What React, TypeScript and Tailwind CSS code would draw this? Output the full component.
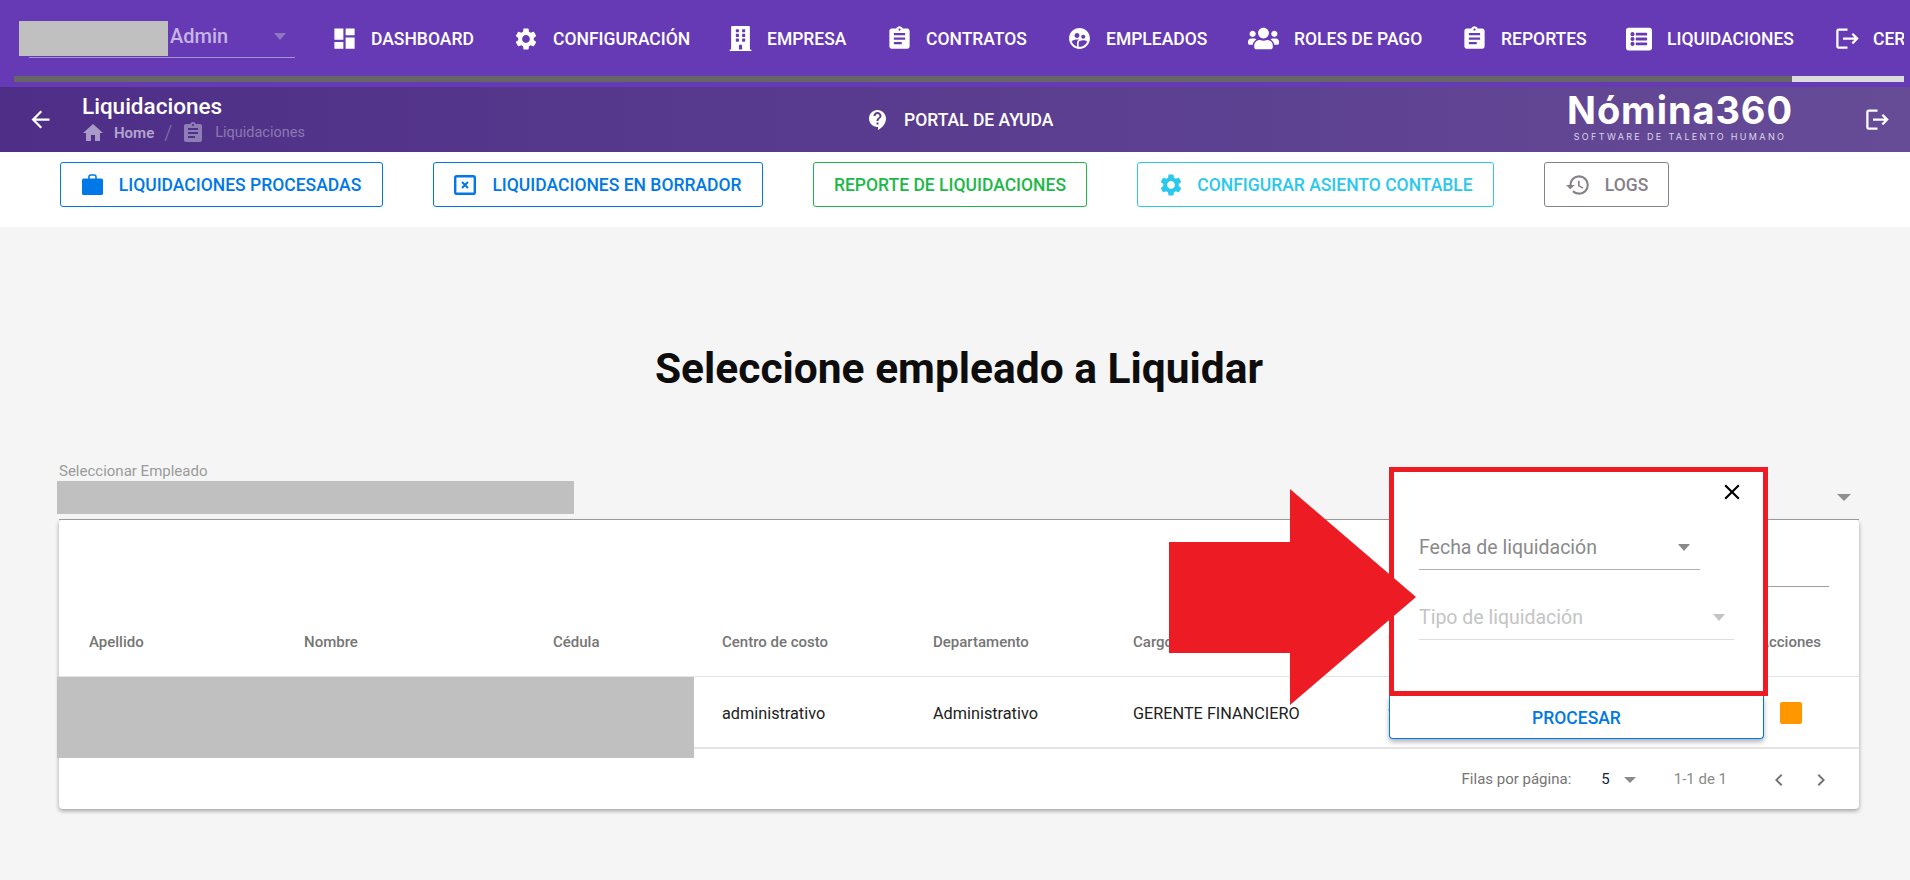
import React from "react";
import { MdDashboard, MdSettings, MdAssignment, MdHome, MdContactSupport, MdArrowBack, MdLogout, MdHistory, MdClose, MdChevronLeft, MdChevronRight, MdSupervisedUserCircle } from "react-icons/md";
import { FaBuilding, FaUsers, FaListAlt } from "react-icons/fa";

const font = { fontFamily: "Roboto, sans-serif" };

function BagIcon() {
  return (
    <svg width="21" height="21" viewBox="0 0 21 21" fill="currentColor">
      <path d="M7 5.5V2.8C7 1.8 7.8 1 8.8 1h3.4c1 0 1.8.8 1.8 1.8v2.7" fill="none" stroke="currentColor" strokeWidth="1.6" />
      <rect x="0" y="4.5" width="21" height="16.5" rx="1.6" />
    </svg>
  );
}

function XBoxIcon() {
  return (
    <svg width="22" height="20" viewBox="0 0 22 20" fill="none" stroke="currentColor">
      <rect x="1.2" y="1.2" width="19.6" height="17.6" rx="1.6" strokeWidth="2.4" />
      <path d="M8 7l6 6M14 7l-6 6" strokeWidth="2" />
    </svg>
  );
}

const navItems: { label: string; icon: React.ReactNode; w: string; box: string }[] = [
  { label: "DASHBOARD", icon: <MdDashboard className="h-[27px] w-[27px]" />, w: "w-[182px]", box: "w-[54px]" },
  { label: "CONFIGURACIÓN", icon: <MdSettings className="h-[26px] w-[26px]" />, w: "w-[214px]", box: "w-[54px]" },
  { label: "EMPRESA", icon: <FaBuilding className="h-[25px] w-[25px]" />, w: "w-[159px]", box: "w-[54px]" },
  { label: "CONTRATOS", icon: <MdAssignment className="h-[27px] w-[27px]" />, w: "w-[180px]", box: "w-[54px]" },
  { label: "EMPLEADOS", icon: <MdSupervisedUserCircle className="h-[25px] w-[25px]" />, w: "w-[181px]", box: "w-[54px]" },
  { label: "ROLES DE PAGO", icon: <FaUsers className="h-[25px] w-[31px]" />, w: "w-[214px]", box: "w-[61px]" },
  { label: "REPORTES", icon: <MdAssignment className="h-[27px] w-[27px]" />, w: "w-[164px]", box: "w-[54px]" },
  { label: "LIQUIDACIONES", icon: <FaListAlt className="h-[26px] w-[26px]" />, w: "w-[208px]", box: "w-[56px]" },
  { label: "CERRAR SESIÓN", icon: <MdLogout className="h-[27px] w-[27px]" />, w: "w-[200px]", box: "w-[54px] pl-[3px]" },
];

const actions = [
  { label: "LIQUIDACIONES PROCESADAS", icon: <BagIcon />, cls: "w-[323px] gap-[16px] text-[#0078e7] border-[#0078e7]" },
  { label: "LIQUIDACIONES EN BORRADOR", icon: <XBoxIcon />, cls: "w-[330px] gap-[16px] text-[#0078e7] border-[#0078e7]" },
  { label: "REPORTE DE LIQUIDACIONES", icon: null, cls: "w-[274px] gap-[16px] text-[#1db84a] border-[#1db84a]" },
  { label: "CONFIGURAR ASIENTO CONTABLE", icon: <MdSettings className="h-[26px] w-[26px]" />, cls: "w-[357px] gap-[13px] text-[#2bc8ee] border-[#2bc8ee]" },
  { label: "LOGS", icon: <MdHistory className="h-[26px] w-[26px]" />, cls: "w-[125px] gap-[14px] text-[#86808a] border-[#86808a]" },
];

const cols = [
  { name: "Apellido", w: "w-[215px]", val: "" },
  { name: "Nombre", w: "w-[249px]", val: "" },
  { name: "Cédula", w: "w-[169px]", val: "" },
  { name: "Centro de costo", w: "w-[211px]", val: "administrativo" },
  { name: "Departamento", w: "w-[200px]", val: "Administrativo" },
  { name: "Cargo", w: "w-[255px]", val: "GERENTE FINANCIERO" },
  { name: "Fecha", w: "w-[371px]", val: "2" },
];

export default function App() {
  return (
    <div style={font} className="relative h-[880px] w-[1910px] overflow-hidden bg-[#f5f5f5]">
      {/* top bar */}
      <header className="h-[87px] bg-[#673ab5] pt-[22px]">
        <div className="flex h-[37px] items-start">
          <div className="relative ml-[29px] flex h-[36px] w-[266px] shrink-0 items-center border-b border-[#a593cd] pb-[7px] pl-[141px]">
            <span className="absolute -left-[10px] -top-px h-[35px] w-[149px] bg-[#c0c0c0]" />
            <span className="text-[20px] font-medium text-[#c5b5e3]">Admin</span>
            <span className="ml-auto mr-[9px] h-0 w-0 border-x-[6px] border-t-[7px] border-x-transparent border-t-[#8d77bf]" />
          </div>
          <nav className="ml-[22px] mr-[6px] flex min-w-0 flex-1 overflow-hidden text-[17.5px] font-medium text-white">
            {navItems.map((n) => (
              <div key={n.label} className={`flex h-[33px] shrink-0 items-center whitespace-nowrap ${n.w}`}>
                <span className={`flex shrink-0 justify-center ${n.box}`}>{n.icon}</span>
                <span className="pt-px">{n.label}</span>
              </div>
            ))}
          </nav>
        </div>
        <div className="ml-[14px] mt-[17px] flex h-[6px] w-[1890px]">
          <div className="flex-1 bg-[#666666]" />
          <div className="w-[112px] bg-[#dcdcdc]" />
        </div>
      </header>

      {/* breadcrumb bar */}
      <section className="relative flex h-[65px] items-center bg-gradient-to-r from-[#4e2e87] to-[#664b97] text-white">
        <MdArrowBack className="ml-[27px] h-[27px] w-[27px] shrink-0" />
        <div className="ml-[28px] flex h-full w-[785px] shrink-0 flex-col pt-[4px]">
          <span className="text-[22.5px] font-medium leading-[30px]">Liquidaciones</span>
          <div className="flex items-center text-[15px] leading-[20px]">
            <MdHome className="-ml-[1px] h-[24px] w-[24px] text-[#a99ac8]" />
            <span className="ml-[9px] font-semibold text-[#b3a6cf]">Home</span>
            <span className="ml-[10px] text-[20px] font-light text-[#8a75b0]">/</span>
            <MdAssignment className="ml-[9px] h-[24px] w-[24px] text-[#8f7eb5]" />
            <span className="ml-[10px] text-[14.5px] text-[#8a79b0]">Liquidaciones</span>
          </div>
        </div>
        <div className="flex w-[702px] shrink-0 items-center gap-[14px] text-[17.5px] font-medium">
          <MdContactSupport className="-ml-[1px] h-[24px] w-[24px]" />
          <span className="pt-[2px]">PORTAL DE AYUDA</span>
        </div>
        <div style={{ fontFamily: "Inter, sans-serif" }} className="-mt-[8px] flex w-[222px] shrink-0 flex-col items-center whitespace-nowrap">
          <span className="text-[38px] font-bold leading-[40px] tracking-[0.9px]">Nómina360</span>
          <span className="mt-[2px] text-[9px] leading-[10px] tracking-[2.35px] text-[#dcd6ea]">SOFTWARE DE TALENTO HUMANO</span>
        </div>
        <MdLogout className="ml-[73px] h-[27px] w-[27px] shrink-0" />
      </section>

      {/* action buttons */}
      <section className="flex h-[75px] gap-[50px] bg-white pl-[60px] pt-[10px]">
        {actions.map((a) => (
          <div key={a.label} className={`flex h-[45px] items-center justify-center rounded-[3px] border text-[17.5px] font-medium whitespace-nowrap ${a.cls}`}>
            {a.icon}
            <span className="pt-[2px]">{a.label}</span>
          </div>
        ))}
      </section>

      {/* heading */}
      <h1 className="mt-[113px] pl-[8px] text-center text-[42.5px] font-bold leading-[58px] text-[#0d0d0d]">Seleccione empleado a Liquidar</h1>

      {/* employee select */}
      <div className="relative mx-[59px] mt-[64px] h-[58px] w-[1800px] border-b border-[#a0a0a0]">
        <div className="text-[15px] leading-[18px] text-[#9b9b9b]">Seleccionar Empleado</div>
        <div className="-ml-[2px] mt-[1px] h-[33px] w-[517px] bg-[#c0c0c0]" />
        <span className="absolute right-[8px] top-[32px] h-0 w-0 border-x-[7px] border-t-[7px] border-x-transparent border-t-[#8f8f8f]" />
      </div>

      {/* table card */}
      <div className="relative mx-[59px] h-[289px] w-[1800px] rounded-[4px] bg-white shadow-[0_2px_4px_rgba(0,0,0,0.35)]">
        <div className="ml-[1330px] h-[67px] w-[440px] border-b border-[#9e9e9e]" />
        <div className="flex h-[90px] items-center border-b border-[#e4e4e4] pl-[30px] pt-[22px] text-[15px] font-medium text-[#757575]">
          {cols.map((c) => (
            <div key={c.name} className={`shrink-0 ${c.w}`}>{c.name}</div>
          ))}
          <div>Acciones</div>
        </div>
        <div className="relative flex h-[72px] items-center border-b-[2px] border-[#e4e4e4] pl-[30px] pt-[4px] text-[16.25px] text-[#212121]">
          {cols.map((c) => (
            <div key={c.name} className={`shrink-0 ${c.w}`}>{c.val}</div>
          ))}
          <span className="-mt-[3px] ml-[21px] h-[22px] w-[22px] rounded-[2px] bg-[#ff9800]" />
          <div className="absolute -left-[2px] top-0 h-[81px] w-[637px] bg-[#c0c0c0]" />
        </div>
        <div className="flex h-[59px] items-center justify-end pr-[26px] pt-[2px] text-[15px] text-[#757575]">
          <span>Filas por página:</span>
          <span className="ml-[30px] text-[#0f1f3d]">5</span>
          <span className="ml-[14px] h-0 w-0 border-x-[6px] border-t-[6px] border-x-transparent border-t-[#8a8a8a]" />
          <span className="ml-[38px] text-[#8a8a8a]">1-1 de 1</span>
          <MdChevronLeft className="ml-[40px] h-[24px] w-[24px] text-[#757575]" />
          <MdChevronRight className="ml-[18px] h-[24px] w-[24px] text-[#757575]" />
        </div>
      </div>

      {/* popover */}
      <div className="absolute left-[1389px] top-[467px] w-[379px]">
        <div className="relative h-[229px] border-[5px] border-[#ed1c24] bg-white">
          <MdClose className="absolute right-[18px] top-[7px] h-[26px] w-[26px] text-black" />
          <div className="absolute left-[25px] top-[53px] flex h-[45px] w-[281px] items-center border-b border-[#b0b0b0] pr-[10px]">
            <span className="pt-[2px] text-[19.5px] text-[#8a8a8a]">Fecha de liquidación</span>
            <span className="ml-auto h-0 w-0 border-x-[6px] border-t-[7px] border-x-transparent border-t-[#8a8a8a]" />
          </div>
          <div className="absolute left-[25px] top-[123px] flex h-[45px] w-[315px] items-center border-b border-[#dedede] pr-[9px]">
            <span className="pt-[2px] text-[19.5px] text-[#c4c4c4]">Tipo de liquidación</span>
            <span className="ml-auto h-0 w-0 border-x-[6px] border-t-[7px] border-x-transparent border-t-[#c4c4c4]" />
          </div>
        </div>
        <div className="flex h-[43px] w-[375px] items-center justify-center rounded-b-[4px] border-x border-b border-[#0078e7] bg-white pt-[2px] text-[17.5px] font-medium text-[#0078e7] shadow-[0_3px_5px_rgba(0,0,0,0.3)]">
          PROCESAR
        </div>
      </div>

      {/* annotation arrow */}
      <svg className="absolute left-[1169px] top-[489px]" width="248" height="217" viewBox="0 0 248 217">
        <path d="M0 53 H121 V0 L247 108 L121 216 V164 H0 Z" fill="#ed1c24" />
      </svg>
    </div>
  );
}
